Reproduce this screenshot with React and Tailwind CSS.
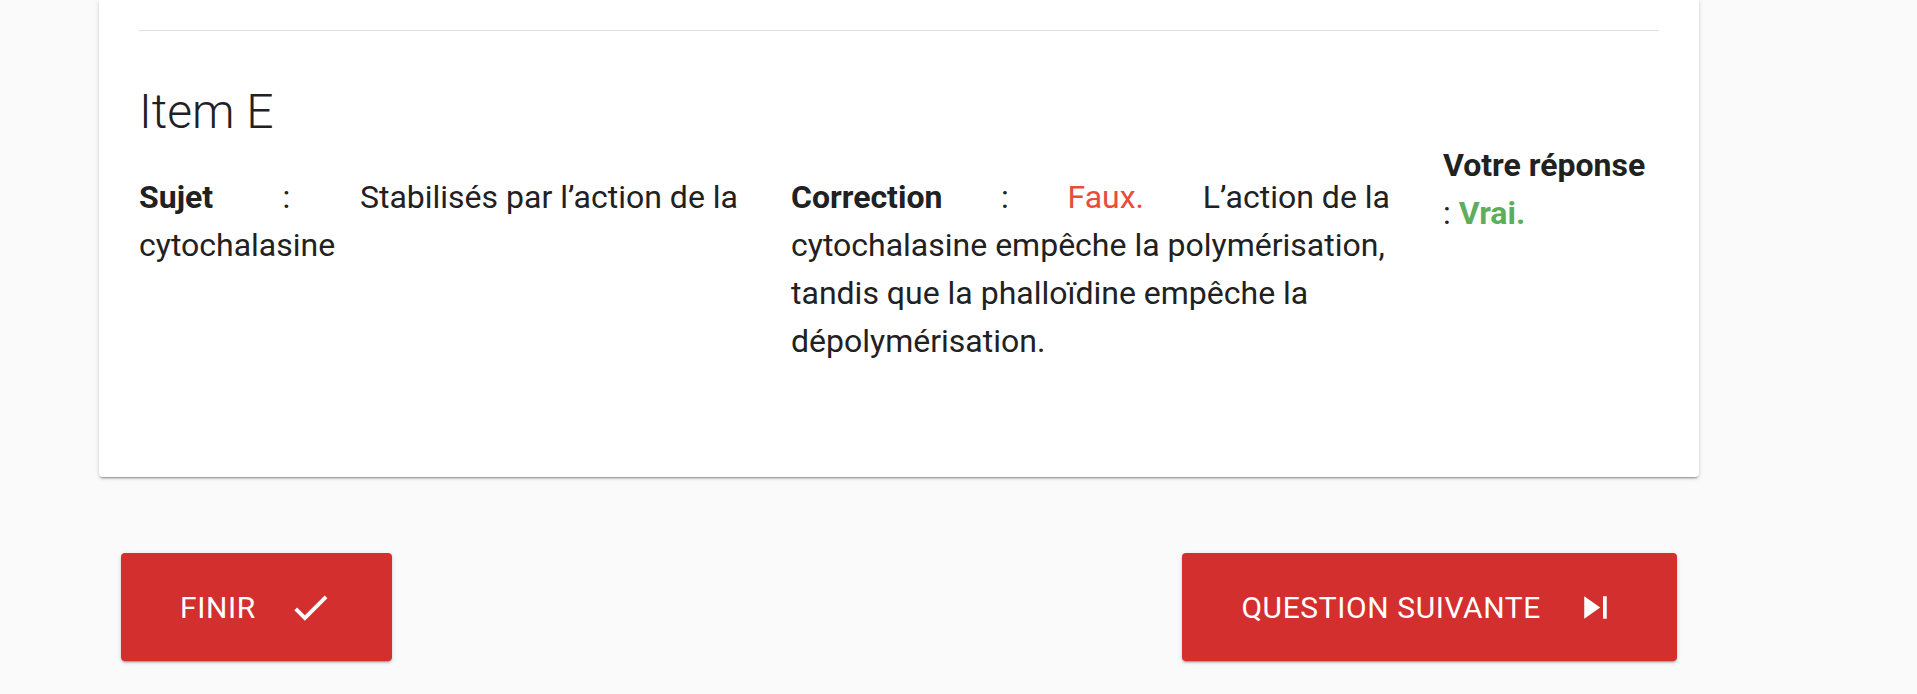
import React from "react";

function CheckIcon() {
  return (
    <svg viewBox="0 0 24 24" className="w-[45px] h-[45px] fill-current">
      <path d="M9 16.17 4.83 12l-1.42 1.41L9 19 21 7l-1.41-1.41z" />
    </svg>
  );
}

function SkipNextIcon() {
  return (
    <svg viewBox="0 0 24 24" className="w-[45px] h-[45px] fill-current">
      <path d="M6 18l8.5-6L6 6v12zM16 6v12h2V6h-2z" />
    </svg>
  );
}

function RedButton({ label, icon }) {
  return (
    <button className="h-[108px] px-[59px] flex items-center gap-[32px] bg-[#d32f2f] text-white text-[30px] tracking-[0.02em] rounded shadow-[0_2px_2px_0_rgba(0,0,0,0.14),0_3px_1px_-2px_rgba(0,0,0,0.2),0_1px_5px_0_rgba(0,0,0,0.12)]">
      <span>{label}</span>
      {icon}
    </button>
  );
}

export default function App() {
  return (
    <div className="min-h-screen bg-[#fafafa] font-['Roboto',sans-serif] text-[#212121]">
      <div className="ml-[99px] w-[1600px]">
        <div className="bg-white rounded-b px-10 pt-[30px] pb-[112px] shadow-[0_2px_2px_0_rgba(0,0,0,0.14),0_3px_1px_-2px_rgba(0,0,0,0.2),0_1px_5px_0_rgba(0,0,0,0.12)]">
          <div className="h-px bg-[#e0e0e0]" />
          <h2 className="mt-[53px] text-[48px] leading-[56px] font-light">Item E</h2>

          <div className="mt-px flex gap-[53px] text-[32px] leading-[48px]">
            {/* Sujet */}
            <div className="w-[599px] mt-[32px]">
              <div className="flex justify-between whitespace-nowrap">
                <span className="font-bold">Sujet</span>
                <span>:</span>
                <span>Stabilisés par l’action de la</span>
              </div>
              <div>cytochalasine</div>
            </div>

            {/* Correction */}
            <div className="w-[599px] mt-[32px] whitespace-nowrap">
              <div className="flex justify-between">
                <span className="font-bold">Correction</span>
                <span>:</span>
                <span className="text-[#e74c3c]">Faux.</span>
                <span>L’action de la</span>
              </div>
              <div>cytochalasine empêche la polymérisation,</div>
              <div>tandis que la phalloïdine empêche la</div>
              <div>dépolymérisation.</div>
            </div>

            {/* Votre réponse */}
            <div className="flex-1">
              <div className="font-bold">Votre réponse</div>
              <div>
                : <span className="font-bold text-[#5cae5c]">Vrai.</span>
              </div>
            </div>
          </div>
        </div>

        <div className="mt-[76px] px-[22px] flex justify-between">
          <RedButton label="FINIR" icon={<CheckIcon />} />
          <RedButton label="QUESTION SUIVANTE" icon={<SkipNextIcon />} />
        </div>
      </div>
    </div>
  );
}
